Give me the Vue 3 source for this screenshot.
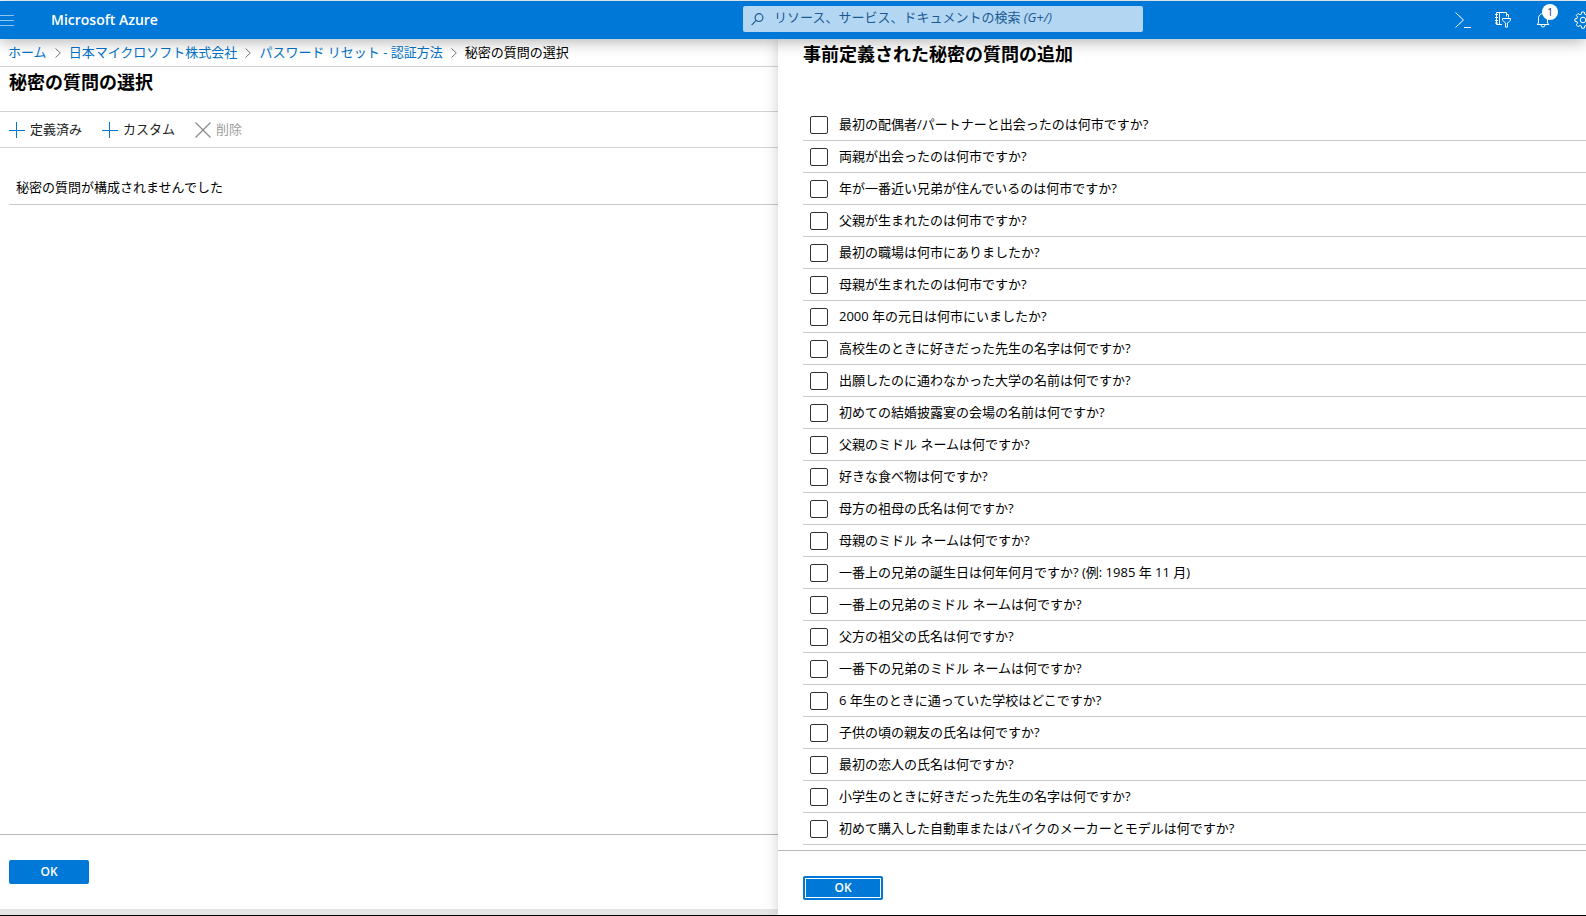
<script setup>
import { ref } from 'vue'

const query = ref('')
const selected = ref([])

const breadcrumbs = ['ホーム', '日本マイクロソフト株式会社', 'パスワード リセット - 認証方法']

const questions = [
  '最初の配偶者/パートナーと出会ったのは何市ですか?',
  '両親が出会ったのは何市ですか?',
  '年が一番近い兄弟が住んでいるのは何市ですか?',
  '父親が生まれたのは何市ですか?',
  '最初の職場は何市にありましたか?',
  '母親が生まれたのは何市ですか?',
  '2000 年の元日は何市にいましたか?',
  '高校生のときに好きだった先生の名字は何ですか?',
  '出願したのに通わなかった大学の名前は何ですか?',
  '初めての結婚披露宴の会場の名前は何ですか?',
  '父親のミドル ネームは何ですか?',
  '好きな食べ物は何ですか?',
  '母方の祖母の氏名は何ですか?',
  '母親のミドル ネームは何ですか?',
  '一番上の兄弟の誕生日は何年何月ですか? (例: 1985 年 11 月)',
  '一番上の兄弟のミドル ネームは何ですか?',
  '父方の祖父の氏名は何ですか?',
  '一番下の兄弟のミドル ネームは何ですか?',
  '6 年生のときに通っていた学校はどこですか?',
  '子供の頃の親友の氏名は何ですか?',
  '最初の恋人の氏名は何ですか?',
  '小学生のときに好きだった先生の名字は何ですか?',
  '初めて購入した自動車またはバイクのメーカーとモデルは何ですか?',
]
</script>

<template>
  <div class="portal">
    <header class="topbar">
      <div class="brand">
        <button class="menu-btn" type="button" aria-label="メニュー">
          <svg width="14" height="11" viewBox="0 0 14 11">
            <path d="M0 .5h14M0 5.5h14M0 10.5h14" stroke="#8cc4f0" fill="none" />
          </svg>
        </button>
        <a class="brand-name" href="#">Microsoft Azure</a>
      </div>

      <div class="search">
        <svg class="search-icon" width="13" height="13" viewBox="0 0 13 13">
          <circle cx="8" cy="4.6" r="3.9" />
          <path d="M5.2 7.4L.6 12.2" />
        </svg>
        <div class="search-field">
          <input id="search" v-model="query" type="text">
          <label v-if="!query" for="search">リソース、サービス、ドキュメントの検索 <em>(G+/)</em></label>
        </div>
      </div>

      <div class="actions">
        <button class="action" type="button" aria-label="Cloud Shell">
          <svg width="16" height="16" viewBox="0 0 16 16">
            <path d="M.5 .5l8 7.5-8 7.5M9 15.5h7" />
          </svg>
        </button>
        <button class="action" type="button" aria-label="フィルター">
          <svg width="16" height="16" viewBox="0 0 16 16">
            <path d="M7 12.5H1.5V.5h10v4M4.5 .5v12M11.5 2.5h2v3M0 2.5h3M0 5.5h3M0 8.5h3M0 11h3" />
            <path d="M7.5 6.5h8v1.6l-3 3v4h-2v-4l-3-3z" />
          </svg>
        </button>
        <button class="action" type="button" aria-label="通知">
          <svg width="16" height="16" viewBox="0 0 16 16">
            <path d="M2 12.5h12M3.5 11V6a4.5 4.5 0 0 1 9 0v5M3.5 10.8l-1.3 1.7M12.5 10.8l1.3 1.7M6 13a2 2 0 0 0 4 0" />
          </svg>
          <span class="badge">1</span>
        </button>
        <button class="action" type="button" aria-label="設定">
          <svg width="18" height="18" viewBox="0 0 18 18">
            <path d="M7.7 1h2.6l.4 2.2 1.3.6 1.9-1.3 1.8 1.8-1.3 1.9.6 1.3 2.1.4v2.4l-2.1.4-.6 1.3 1.3 1.9-1.8 1.8-1.9-1.3-1.3.6-.4 2.2H7.7l-.4-2.2-1.3-.6-1.9 1.3-1.8-1.8 1.3-1.9-.6-1.3-2.1-.4V7.9l2.1-.4.6-1.3-1.3-1.9 1.8-1.8L6 3.8l1.3-.6z" />
            <circle cx="9" cy="9" r="2.8" />
          </svg>
        </button>
      </div>
    </header>

    <main class="blades">
      <section class="blade">
        <nav class="breadcrumbs">
          <template v-for="crumb in breadcrumbs" :key="crumb">
            <a href="#">{{ crumb }}</a>
            <svg width="6" height="10" viewBox="0 0 6 10">
              <path d="M.5.5L5.3 5 .5 9.5" fill="none" stroke="#7a7a7a" />
            </svg>
          </template>
          <span>秘密の質問の選択</span>
        </nav>

        <div class="blade-heading">
          <h1>秘密の質問の選択</h1>
        </div>

        <div class="toolbar">
          <button type="button">
            <svg width="16" height="16" viewBox="0 0 16 16">
              <path d="M7.5 0v16M0 8.5h16" stroke="#0078d4" />
            </svg>
            <span>定義済み</span>
          </button>
          <button type="button">
            <svg width="16" height="16" viewBox="0 0 16 16">
              <path d="M7.5 0v16M0 8.5h16" stroke="#0078d4" />
            </svg>
            <span>カスタム</span>
          </button>
          <button type="button" disabled>
            <svg width="16" height="16" viewBox="0 0 16 16">
              <path d="M.5.5l15 15M15.5.5l-15 15" stroke="#8a8886" stroke-width="1.2" />
            </svg>
            <span>削除</span>
          </button>
        </div>

        <p class="empty">秘密の質問が構成されませんでした</p>

        <footer class="blade-footer">
          <button class="ok" type="button">OK</button>
        </footer>
        <div class="scroll-track"></div>
      </section>

      <section class="blade context">
        <h2>事前定義された秘密の質問の追加</h2>
        <ul class="questions">
          <li v-for="(question, index) in questions" :key="index">
            <input :id="`question-${index}`" v-model="selected" type="checkbox" :value="index">
            <label :for="`question-${index}`">{{ question }}</label>
          </li>
        </ul>
        <footer class="blade-footer">
          <button class="ok focused" type="button">OK</button>
        </footer>
      </section>
    </main>
  </div>
</template>

<style>
body {
  margin: 0;
  background: #fff;
}
</style>

<style scoped>
.portal {
  display: flex;
  flex-direction: column;
  box-sizing: border-box;
  min-height: 100vh;
  padding-top: 1px;
  border-bottom: 1px solid #000;
  overflow: hidden;
  font-family: "Open Sans", "Noto Sans CJK JP", sans-serif;
  font-size: 13px;
  line-height: 18px;
  color: #000;
}

button,
input {
  font: inherit;
}

button {
  margin: 0;
  padding: 0;
  border: 0;
  background: none;
  color: inherit;
  cursor: pointer;
}

a {
  text-decoration: none;
}

svg {
  flex: none;
  display: block;
}

/* top bar */
.topbar {
  position: relative;
  z-index: 2;
  display: flex;
  align-items: center;
  height: 38px;
  background: #0078d7;
  box-shadow: 0 2px 16px rgba(0, 0, 0, 0.32);
}

.brand {
  flex: 1;
  display: flex;
  align-items: center;
}

.menu-btn {
  width: 51px;
}

.brand-name {
  color: #fff;
  font-size: 14px;
  font-weight: 600;
}

.search {
  flex: 0 1 400px;
  display: flex;
  align-items: center;
  gap: 10px;
  box-sizing: border-box;
  height: 26px;
  margin-bottom: 2px;
  padding-left: 8px;
  border-radius: 2px;
  background: #b3d7f3;
  color: #1c5a94;
}

.search-icon {
  fill: none;
  stroke: #1c5a94;
  stroke-width: 1.2;
}

.search-field {
  position: relative;
  flex: 1;
  height: 24px;
}

.search-field input {
  box-sizing: border-box;
  width: 100%;
  height: 100%;
  padding: 0;
  border: 0;
  outline: 0;
  background: transparent;
}

/* sits over the empty text box as its hint */
.search-field label {
  position: absolute;
  top: 1px;
  left: 0;
  white-space: nowrap;
}

/* the last button runs past the right edge of the window */
.actions {
  flex: 0 0 29%;
  display: flex;
  justify-content: flex-end;
  margin-right: -17px;
}

.action {
  position: relative;
  display: flex;
  align-items: center;
  justify-content: center;
  width: 40px;
  height: 38px;
}

.action svg {
  fill: none;
  stroke: #fff;
}

.badge {
  position: absolute;
  top: 3px;
  left: 19px;
  width: 16px;
  height: 16px;
  border-radius: 8px;
  background: #fff;
  color: #1b1b6b;
  font-size: 10px;
  line-height: 16px;
  text-align: center;
}

/* blades */
.blades {
  flex: 1;
  display: grid;
  grid-template-columns: 389fr 404fr;
}

.blade {
  display: flex;
  flex-direction: column;
  min-width: 0;
  background: #fff;
}

.context {
  position: relative;
  z-index: 1;
  box-shadow: 0 0 14px rgba(0, 0, 0, 0.2);
}

.breadcrumbs {
  display: flex;
  align-items: center;
  gap: 8px;
  height: 27px;
  padding-left: 8px;
  border-bottom: 1px solid #d2d2d2;
  white-space: nowrap;
}

.breadcrumbs a {
  color: #0072c9;
}

.breadcrumbs a,
.breadcrumbs span,
.toolbar span,
.questions label {
  padding-bottom: 2px;
}

h1,
h2 {
  margin: 0;
  font-size: 18px;
  font-weight: 700;
  line-height: 24px;
}

.blade-heading {
  padding: 3px 9px 17px;
  border-bottom: 1px solid #d2d2d2;
}

.toolbar {
  display: flex;
  align-items: center;
  gap: 20px;
  height: 35px;
  padding-left: 9px;
  border-bottom: 1px solid #d2d2d2;
}

.toolbar button {
  display: flex;
  align-items: center;
  gap: 5px;
  color: #222;
}

.toolbar button:disabled {
  color: #a0a0a0;
  cursor: default;
}

.empty {
  margin: 24px 0 0 9px;
  padding: 6px 7px 8px;
  border-bottom: 1px solid #c8c8c8;
}

.context h2 {
  padding: 3px 25px 43px;
}

.questions {
  margin: 0 0 5px 25px;
  padding: 0;
  list-style: none;
}

.questions li {
  display: flex;
  align-items: center;
  gap: 11px;
  height: 31px;
  padding-left: 7px;
  border-bottom: 1px solid #c8c8c8;
}

.questions input {
  flex: none;
  appearance: none;
  box-sizing: border-box;
  width: 18px;
  height: 18px;
  margin: 0;
  border: 1px solid #333;
  border-radius: 2px;
  background: #fff;
}

.questions input:checked {
  background: #0078d7;
}

.blade-footer {
  margin-top: auto;
  padding: 25px 9px;
  border-top: 1px solid #b8b8b8;
}

.context .blade-footer {
  padding: 25px 25px 15px;
}

.ok {
  display: block;
  width: 80px;
  height: 24px;
  border-radius: 2px;
  background: #0078d7;
  color: #fff;
  font-size: 12px;
  font-weight: 600;
}

.ok.focused {
  outline: 1px solid #fff;
  outline-offset: -3px;
}

.scroll-track {
  height: 6px;
  background: #e5e5e5;
}
</style>
